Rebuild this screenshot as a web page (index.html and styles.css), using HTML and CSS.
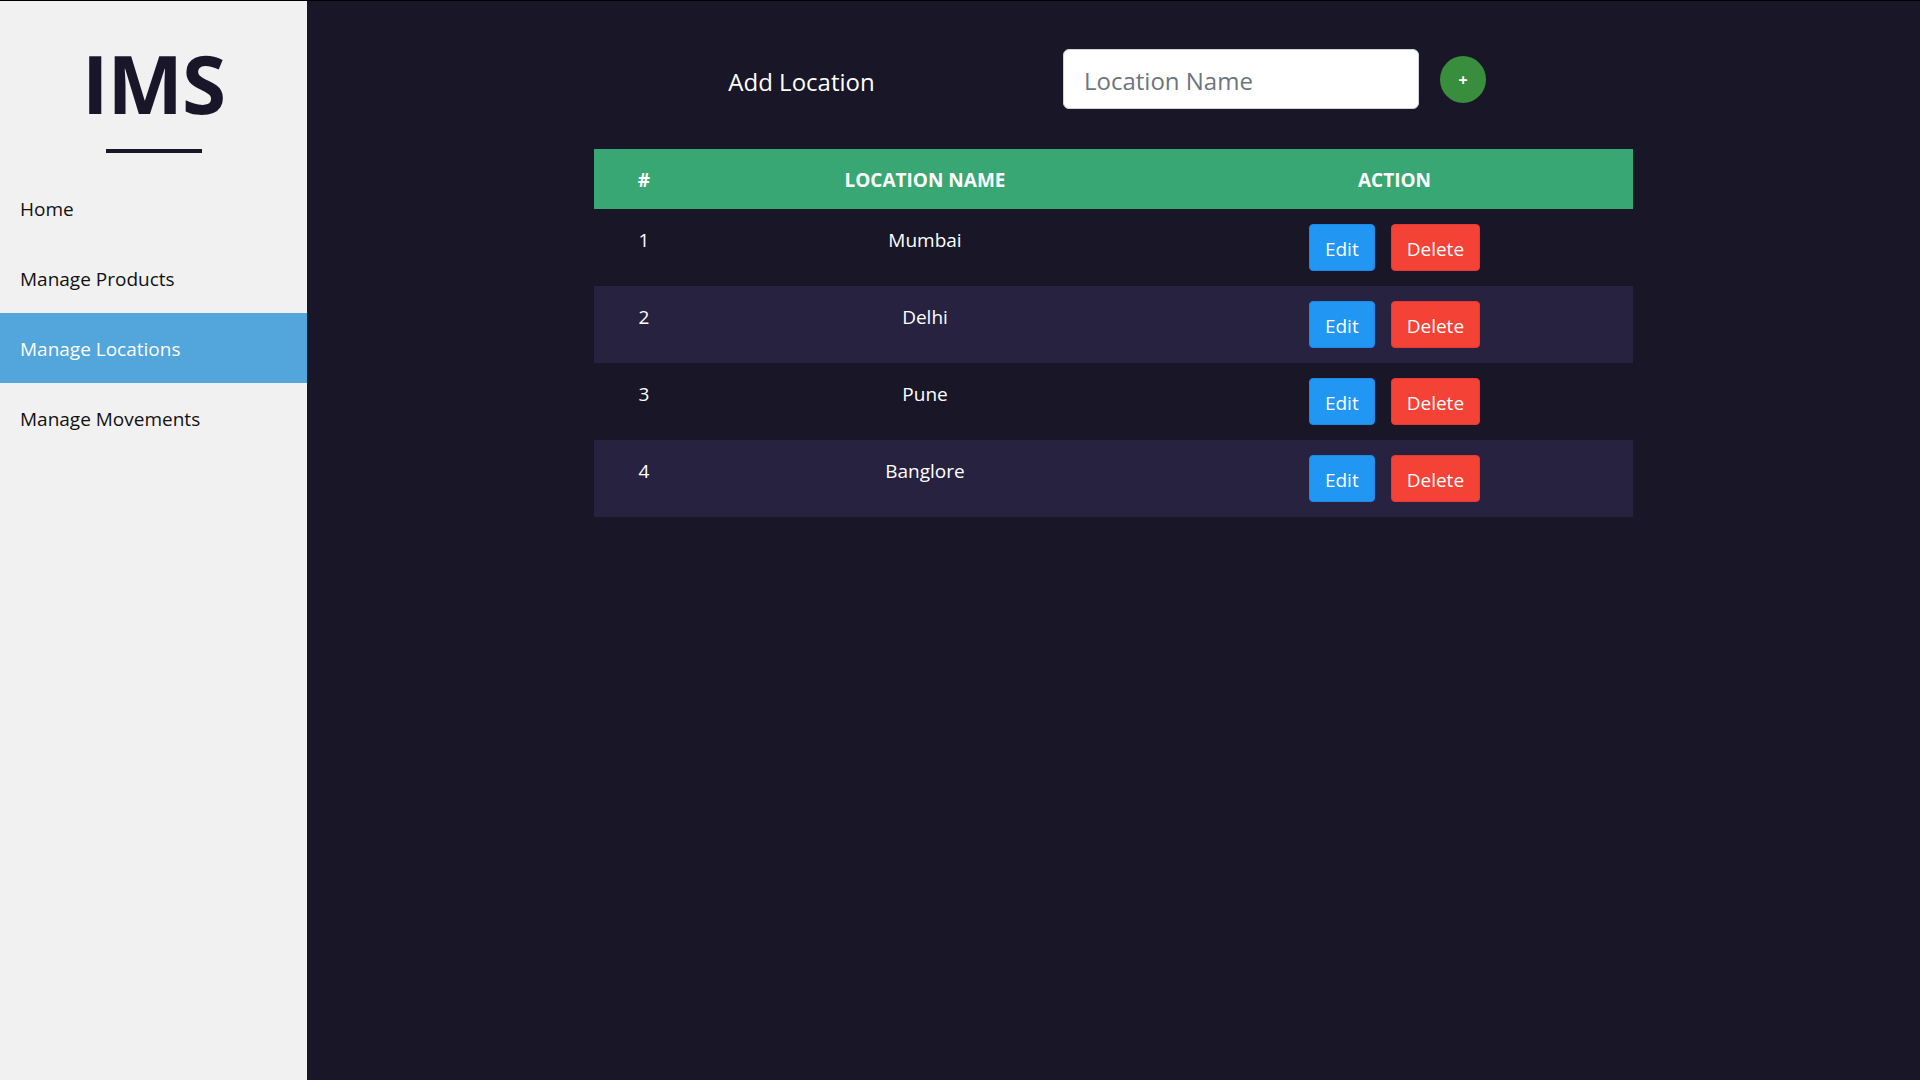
FILE: index.html
```html
<!DOCTYPE html>
<html lang="en">
<head>
<meta charset="utf-8">
<title>IMS - Manage Locations</title>
<link rel="stylesheet" href="styles.css">
</head>
<body>
<div class="app">
  <aside class="sidebar">
    <div class="brand">
      <h1 class="brand-title">IMS</h1>
      <div class="brand-rule"></div>
    </div>
    <nav class="nav">
      <a class="nav-item" href="#">Home</a>
      <a class="nav-item" href="#">Manage Products</a>
      <a class="nav-item active" href="#">Manage Locations</a>
      <a class="nav-item" href="#">Manage Movements</a>
    </nav>
  </aside>
  <main class="main">
    <form class="add-form">
      <label class="add-label" for="loc">Add Location</label>
      <input class="add-input" id="loc" type="text" placeholder="Location Name">
      <button class="add-btn" type="button">+</button>
    </form>
    <table class="loc-table">
      <colgroup>
        <col class="col-num">
        <col class="col-name">
        <col class="col-action">
      </colgroup>
      <thead>
        <tr><th>#</th><th>LOCATION NAME</th><th>ACTION</th></tr>
      </thead>
      <tbody>
        <tr>
          <td>1</td><td>Mumbai</td>
          <td class="action-cell"><div class="actions"><button class="btn btn-edit">Edit</button><button class="btn btn-delete">Delete</button></div></td>
        </tr>
        <tr>
          <td>2</td><td>Delhi</td>
          <td class="action-cell"><div class="actions"><button class="btn btn-edit">Edit</button><button class="btn btn-delete">Delete</button></div></td>
        </tr>
        <tr>
          <td>3</td><td>Pune</td>
          <td class="action-cell"><div class="actions"><button class="btn btn-edit">Edit</button><button class="btn btn-delete">Delete</button></div></td>
        </tr>
        <tr>
          <td>4</td><td>Banglore</td>
          <td class="action-cell"><div class="actions"><button class="btn btn-edit">Edit</button><button class="btn btn-delete">Delete</button></div></td>
        </tr>
      </tbody>
    </table>
  </main>
</div>
</body>
</html>
```
FILE: styles.css
```css
* { box-sizing: border-box; }

html, body {
  margin: 0;
  padding: 0;
  height: 100%;
}

body {
  font-family: "Open Sans", "Noto Sans", sans-serif;
  font-size: 20px;
  line-height: 1.5;
  background: #181627;
}

.app {
  display: flex;
  min-height: 100vh;
  border-top: 1px solid #000;
}

.sidebar {
  width: 307px;
  flex-shrink: 0;
  background: #f1f1f1;
  display: flex;
  flex-direction: column;
}

.brand {
  display: flex;
  flex-direction: column;
  align-items: center;
  padding-top: 42px;
}

.brand-title {
  margin: 0;
  font-size: 80px;
  line-height: 80px;
  font-weight: 700;
  color: #181628;
  letter-spacing: -1px;
}

.brand-rule {
  width: 96px;
  height: 4px;
  background: #181628;
  margin-top: 26px;
}

.nav {
  margin-top: 20px;
  display: flex;
  flex-direction: column;
}

.nav-item {
  display: block;
  height: 70px;
  line-height: 70px;
  padding: 1px 20px 0;
  color: #111;
  text-decoration: none;
  font-size: 19px;
}

.nav-item.active {
  background: #52a6dc;
  color: #fff;
}

.main {
  flex: 1;
  display: flex;
  flex-direction: column;
  align-items: center;
  padding-top: 48px;
}

.add-form {
  display: flex;
  align-items: center;
  margin: 0 12px 40px 0;
}

.add-label {
  color: #fff;
  font-size: 24px;
  width: 145px;
  white-space: nowrap;
  margin-right: 189px;
  padding-top: 5px;
  display: flex;
  justify-content: center;
}

.add-input {
  width: 356px;
  height: 60px;
  padding: 2px 20px 0;
  font-family: inherit;
  font-size: 24px;
  color: #495057;
  background: #fff;
  border: 1px solid #ced4da;
  border-radius: 6px;
  outline: none;
}

.add-input::placeholder {
  color: #6c757d;
}

.add-btn {
  width: 46px;
  height: 47px;
  margin-left: 21px;
  border: none;
  border-radius: 50%;
  background: #388e3c;
  color: #fff;
  font-family: inherit;
  font-weight: 700;
  font-size: 16px;
  line-height: 1;
  padding: 2px 0 0;
}

.loc-table {
  width: 1039px;
  border-collapse: collapse;
  color: #fff;
  table-layout: fixed;
}

.col-num { width: 100px; }
.col-name { width: 462px; }
.col-action { width: 477px; }

.loc-table thead tr {
  background: #38a773;
}

.loc-table th {
  padding: 16px 15px 14px;
  font-weight: 700;
  font-size: 19px;
  line-height: 30px;
  text-align: center;
}

.loc-table td {
  padding: 16px 15px 14px;
  text-align: center;
  vertical-align: top;
  font-size: 19px;
  line-height: 30px;
}

.loc-table td.action-cell {
  padding: 15px;
}

.loc-table tbody tr:nth-child(even) {
  background: #282241;
}

.actions {
  display: flex;
  justify-content: center;
  gap: 16px;
}

.btn {
  font-family: inherit;
  font-size: 19px;
  line-height: 30px;
  padding: 8.5px 15px 6.5px;
  border-radius: 4px;
  color: #fff;
  cursor: pointer;
}

.btn-edit {
  background: #2196f3;
  border: 1px solid #1e88e5;
}

.btn-delete {
  background: #f44336;
  border: 1px solid #e53935;
}
```
